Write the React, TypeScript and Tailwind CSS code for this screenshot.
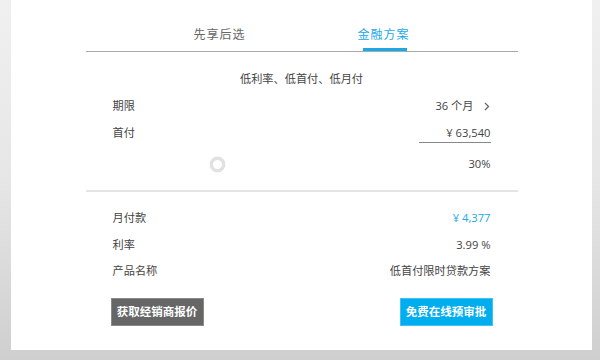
import { ReactNode } from 'react';

function Row({ label, children, className = '' }: { label: string; children: ReactNode; className?: string }) {
  return (
    <div className={`flex items-center justify-between h-[18px] leading-[18px] ${className}`}>
      <span>{label}</span>
      {children}
    </div>
  );
}

export default function App() {
  return (
    <div className="w-[600px] h-[360px] bg-gradient-to-b from-[#f0f0f0] via-[#e6e6e6] to-[#cfcfcf] pl-[11px] pr-[8px] pb-[10px] font-['Open_Sans','Noto_Sans_CJK_SC',sans-serif] text-[11.2px] text-[#444]">
      <div className="h-full bg-white pt-[26px]">
        {/* Tabs */}
        <div className="mx-auto w-[432px] border-b border-[#aaa] flex justify-center gap-[112px]">
          <div className="pb-[7px] leading-[18px] text-[12px] text-[#666] tracking-[1px]">先享后选</div>
          <div className="relative pb-[7px] leading-[18px] text-[12px] text-[#1aa9e6] tracking-[1px]">
            金融方案
            <div className="absolute bottom-0 left-[5px] right-[3px] h-[3px] bg-[#1aa9e6]" />
          </div>
        </div>

        <div className="mx-auto w-[432px]">
          <div className="mt-[18px] text-center leading-[18px]">低利率、低首付、低月付</div>

          <div className="px-[27px]">
            <Row label="期限" className="mt-[9px]">
              <span className="flex items-center">
                36 个月
                <svg width="6" height="9" viewBox="0 0 6 9" className="ml-[10px] mr-[1px]">
                  <path d="M1 1 L4.5 4.5 L1 8" fill="none" stroke="#666" strokeWidth="1.3" />
                </svg>
              </span>
            </Row>

            <Row label="首付" className="mt-[9px]">
              <span className="w-[72px] text-right border-b border-[#888] leading-[18px]">¥ 63,540</span>
            </Row>

            {/* slider knob + percent */}
            <div className="mt-[13px] flex items-center justify-between h-[18px] leading-[18px]">
              <div className="ml-[97px] w-[15px] h-[15px] rounded-full border-[3px] border-[#e2e2e2] bg-white shadow-[0_0_1px_rgba(0,0,0,0.25)]" />
              <span>30%</span>
            </div>
          </div>

          <div className="mt-[17px] h-[2px] bg-[#e4e4e4]" />

          <div className="px-[27px]">
            <Row label="月付款" className="mt-[17px]">
              <span className="text-[#1aa9e6]">¥ 4,377</span>
            </Row>
            <Row label="利率" className="mt-[9px]">
              <span>3.99 %</span>
            </Row>
            <Row label="产品名称" className="mt-[8px]">
              <span>低首付限时贷款方案</span>
            </Row>

            <div className="mt-[18px] flex justify-between">
              <button className="-ml-[2px] w-[93px] h-[28px] bg-[#666] border border-[#8a8a8a] text-white font-semibold text-[11.5px]">
                获取经销商报价
              </button>
              <button className="mr-[-2px] w-[93px] h-[28px] bg-[#00adef] border border-[#3fc2f2] text-white font-semibold text-[11.5px]">
                免费在线预审批
              </button>
            </div>
          </div>
        </div>
      </div>
    </div>
  );
}
